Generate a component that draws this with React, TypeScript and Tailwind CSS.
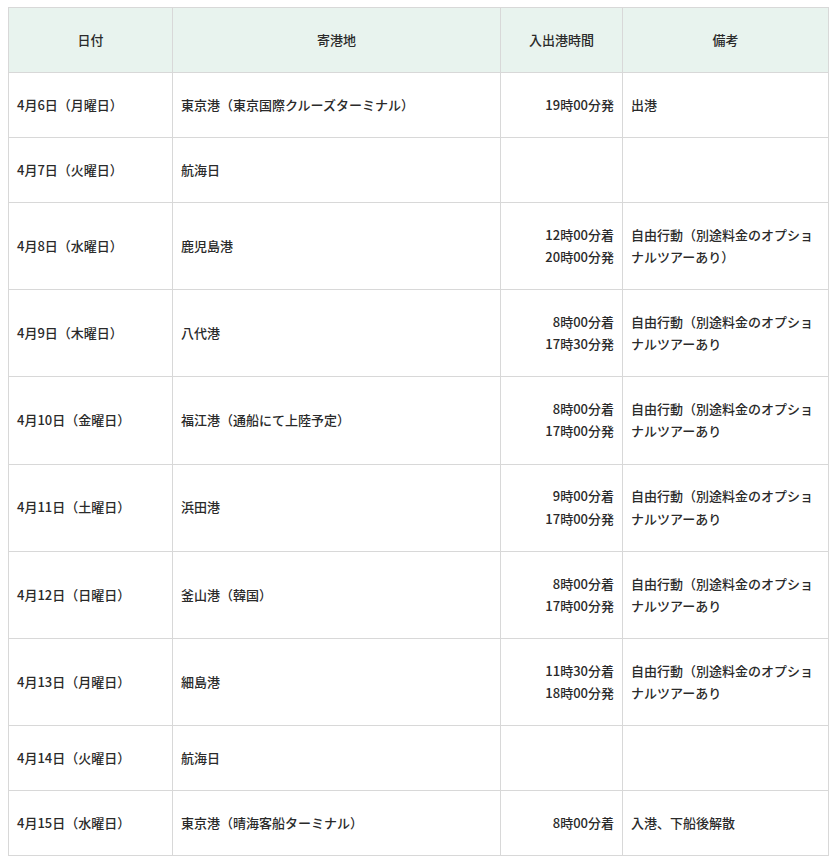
import React from "react";

type Row = { date: string; port: string; times: string[]; note: string };

const rows: Row[] = [
  { date: "4月6日（月曜日）", port: "東京港（東京国際クルーズターミナル）", times: ["19時00分発"], note: "出港" },
  { date: "4月7日（火曜日）", port: "航海日", times: [], note: "" },
  { date: "4月8日（水曜日）", port: "鹿児島港", times: ["12時00分着", "20時00分発"], note: "自由行動（別途料金のオプショナルツアーあり）" },
  { date: "4月9日（木曜日）", port: "八代港", times: ["8時00分着", "17時30分発"], note: "自由行動（別途料金のオプショナルツアーあり" },
  { date: "4月10日（金曜日）", port: "福江港（通船にて上陸予定）", times: ["8時00分着", "17時00分発"], note: "自由行動（別途料金のオプショナルツアーあり" },
  { date: "4月11日（土曜日）", port: "浜田港", times: ["9時00分着", "17時00分発"], note: "自由行動（別途料金のオプショナルツアーあり" },
  { date: "4月12日（日曜日）", port: "釜山港（韓国）", times: ["8時00分着", "17時00分発"], note: "自由行動（別途料金のオプショナルツアーあり" },
  { date: "4月13日（月曜日）", port: "細島港", times: ["11時30分着", "18時00分発"], note: "自由行動（別途料金のオプショナルツアーあり" },
  { date: "4月14日（火曜日）", port: "航海日", times: [], note: "" },
  { date: "4月15日（水曜日）", port: "東京港（晴海客船ターミナル）", times: ["8時00分着"], note: "入港、下船後解散" },
];

const cell = "border border-[#d8d8d8] px-[8px] py-[20.8px] align-middle font-medium";

export default function App() {
  return (
    <div
      className="bg-white w-[838px] h-[866px] pt-[7px] pl-[8px]"
      style={{ fontFamily: '"Noto Sans CJK JP", "Noto Sans", sans-serif' }}
    >
      <table className="border-collapse table-fixed w-[820px] text-[13px] leading-[22.33px] text-[#2a2a2a]">
        <colgroup>
          <col className="w-[164px]" />
          <col className="w-[328px]" />
          <col className="w-[122px]" />
          <col className="w-[206px]" />
        </colgroup>
        <thead>
          <tr className="bg-[#e8f3ee]">
            <th className={`${cell} text-center`}>日付</th>
            <th className={`${cell} text-center`}>寄港地</th>
            <th className={`${cell} text-center`}>入出港時間</th>
            <th className={`${cell} text-center`}>備考</th>
          </tr>
        </thead>
        <tbody>
          {rows.map((r, i) => (
            <tr key={i}>
              <td className={`${cell} text-left`}>{r.date}</td>
              <td className={`${cell} text-left`}>{r.port}</td>
              <td className={`${cell} text-right`}>
                {r.times.map((t, j) => (
                  <div key={j}>{t}</div>
                ))}
              </td>
              <td className={`${cell} text-left`}>{r.note}</td>
            </tr>
          ))}
        </tbody>
      </table>
    </div>
  );
}
